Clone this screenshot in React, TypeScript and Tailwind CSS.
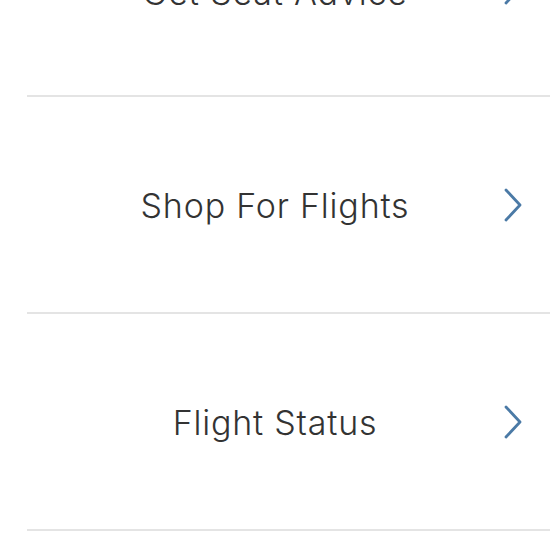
const items = [
  { label: "Get Seat Advice", nudge: "translate-y-[4px]" },
  { label: "Shop For Flights", nudge: "" },
  { label: "Flight Status", nudge: "" },
];

function Chevron() {
  return (
    <svg width="20" height="34" viewBox="0 0 20 34" fill="none">
      <path
        d="M3 2 L17 17 L3 32"
        stroke="#4b7aa6"
        strokeWidth="2.8"
        strokeLinecap="round"
        strokeLinejoin="round"
      />
    </svg>
  );
}

export default function App() {
  return (
    <div className="h-[550px] w-[550px] overflow-hidden bg-white font-['Inter',sans-serif]">
      <div className="-mt-[120px]">
        {items.map((item) => (
          <div key={item.label}>
            <div className="grid h-[215px] grid-cols-[1fr_auto_1fr] items-center">
              <div />
              <span
                className={`pt-[2px] text-[34px] leading-none font-light tracking-[0.8px] text-[#333333] ${item.nudge}`}
              >
                {item.label}
              </span>
              <div className="flex justify-end pr-[27px]">
                <Chevron />
              </div>
            </div>
            <div className="ml-[27px] h-[2px] bg-[#e4e4e4]" />
          </div>
        ))}
      </div>
    </div>
  );
}
